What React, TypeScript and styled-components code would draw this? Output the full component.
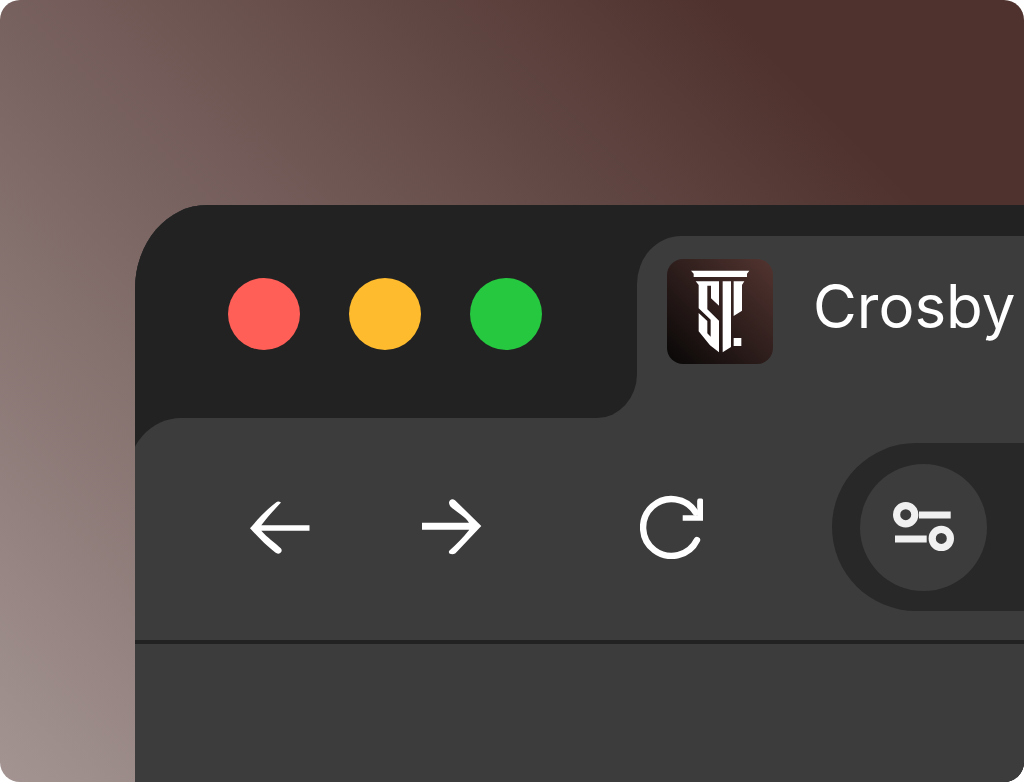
import React from "react";
import styled, { createGlobalStyle } from "styled-components";

const dark = "#222222";
const surface = "#3c3c3c";

const GlobalStyle = createGlobalStyle`
  * { box-sizing: border-box; }
  body { margin: 0; background: #ffffff; font-family: Inter, "Liberation Sans", sans-serif; }
  button { border: 0; padding: 0; background: none; color: inherit; font: inherit; cursor: pointer; }
  svg { display: block; }
`;

const Stage = styled.main`
  display: flex;
  min-height: 100vh;
  padding: 205px 0 0 135px;
  border-radius: 20px;
  overflow: hidden;
  background: linear-gradient(45deg, #a39492 0%, #4f322e 83%);
`;

const BrowserWindow = styled.section`
  flex: 1;
  min-width: 0;
  display: flex;
  flex-direction: column;
  overflow: hidden;
  border-top-left-radius: 72px 84px;
  background: ${dark};
`;

const TitleBar = styled.header`
  display: flex;
`;

const ControlsCell = styled.div`
  flex: none;
  background: ${surface};
`;

const Controls = styled.div`
  display: flex;
  gap: 49px;
  height: 213px;
  padding: 73px 95px 0 93px;
  border-bottom-right-radius: 40px 44px;
  background: ${dark};
`;

const Light = styled.button<{ $color: string }>`
  width: 72px;
  height: 72px;
  border-radius: 50%;
  background: ${(p) => p.$color};
`;

const Tab = styled.button`
  flex: 1;
  min-width: 0;
  display: flex;
  align-items: flex-start;
  gap: 40px;
  margin-top: 31px;
  padding: 23px 0 0 30px;
  overflow: hidden;
  border-top-left-radius: 44px 48px;
  background: ${surface};
  color: #ffffff;
`;

const Favicon = styled.span`
  flex: none;
  width: 106px;
  height: 105px;
  border-radius: 16px;
  overflow: hidden;
  background: linear-gradient(45deg, #0c0909 5%, #4f322e 95%);
`;

const TabTitle = styled.span`
  font-size: 60px;
  line-height: 94px;
  white-space: nowrap;
`;

const Toolbar = styled.nav`
  display: flex;
  align-items: center;
  margin-left: -8px;
  padding: 25px 0 29px 123px;
  border-top-left-radius: 54px 60px;
  border-bottom: 4px solid ${dark};
  background: ${surface};
  color: #ffffff;
`;

const ToolButton = styled.button<{ $after: number }>`
  flex: none;
  margin-right: ${(p) => p.$after}px;
`;

const AddressBar = styled.div`
  flex: 1;
  min-width: 0;
  display: flex;
  align-items: center;
  height: 168px;
  padding-left: 28px;
  border-radius: 84px 0 0 84px;
  background: #282828;
`;

const SiteSettings = styled.button`
  flex: none;
  display: grid;
  place-items: center;
  width: 127px;
  height: 127px;
  border-radius: 50%;
  background: ${surface};
  color: #f0f0f0;
`;

const AddressInput = styled.input`
  flex: 1;
  min-width: 0;
  width: 0;
  height: 96px;
  padding: 0;
  border: 0;
  outline: 0;
  background: transparent;
  color: #ffffff;
  font: inherit;
  font-size: 60px;
`;

const Content = styled.div`
  flex: 1;
  background: ${surface};
`;

const BackIcon = () => (
  <svg width="60" height="64" viewBox="0 0 60 64" fill="currentColor" aria-hidden="true">
    <path d="M0 33.3C8 24 17 14 26.3 7.2Q28.2 5.4 31 7.6C24 15 17 22.5 11.3 30.3H59.5V35.7H11.3C17.5 43 24.5 47 31 53.4Q32.6 56 30.5 57.8Q28 59.6 25.3 57.6C16 50.5 8 42 0 33.3Z" />
  </svg>
);

const ForwardIcon = () => (
  <svg width="60" height="64" viewBox="0 0 60 64" fill="currentColor" aria-hidden="true">
    <path d="M59.3 31L33 5.2Q30.3 3 27.8 5.4Q26 8 28.2 11.2C34 17 43 21 47 27.7H0V34.7H47.3C41 42.5 34.5 49 27.5 55.5Q26 57.4 27.8 58.8Q31 60 33.5 58.2Z" />
  </svg>
);

const ReloadIcon = () => (
  <svg width="64" height="64" viewBox="0 0 64 64" fill="none" stroke="currentColor" aria-hidden="true">
    <path d="M57 45A28.4 28.4 0 1 1 55.7 17.6" strokeWidth="6.4" strokeLinecap="round" />
    <path d="M42.7 23H60.2V5.4" strokeWidth="5.6" />
    <rect x="57.4" y="3.4" width="5.6" height="10" rx="1.5" fill="currentColor" stroke="none" />
  </svg>
);

const TuneIcon = () => (
  <svg width="64" height="56" viewBox="0.7 0.3 64 56" fill="none" stroke="currentColor" aria-hidden="true">
    <circle cx="14.4" cy="16" r="9.1" strokeWidth="7.2" />
    <path d="M27.7 16.2H59.4M3.7 40.2H35.4" strokeWidth="7" />
    <circle cx="50" cy="39.7" r="9.1" strokeWidth="7.2" />
  </svg>
);

const ColumnLogo = () => (
  <svg width="106" height="105" viewBox="36 25 318 315" fill="#ffffff" aria-hidden="true">
    <path d="M108 60H283L276 69V79H116V69Z" />
    <path d="M122 92H192V165L168 143V105H157V176L192 210V305L165 284L131 242V187L157 211V248L167 258V207L131 173V103Z" />
    <path d="M203 92H228V289L203 305Z" />
    <path d="M236 92H268L261 103V180L236 196Z" />
    <path d="M236 262H259V286H236Z" />
  </svg>
);

export default function App() {
  return (
    <>
      <GlobalStyle />
      <Stage>
        <BrowserWindow aria-label="Browser window">
          <TitleBar>
            <ControlsCell>
              <Controls>
                <Light $color="#ff5f57" aria-label="Close" />
                <Light $color="#febb2e" aria-label="Minimize" />
                <Light $color="#26c840" aria-label="Maximize" />
              </Controls>
            </ControlsCell>
            <Tab>
              <Favicon>
                <ColumnLogo />
              </Favicon>
              <TabTitle>Crosby</TabTitle>
            </Tab>
          </TitleBar>
          <Toolbar aria-label="Navigation">
            <ToolButton $after={112} aria-label="Back">
              <BackIcon />
            </ToolButton>
            <ToolButton $after={158} aria-label="Forward">
              <ForwardIcon />
            </ToolButton>
            <ToolButton $after={128} aria-label="Reload">
              <ReloadIcon />
            </ToolButton>
            <AddressBar>
              <SiteSettings aria-label="Site settings">
                <TuneIcon />
              </SiteSettings>
              <AddressInput type="text" aria-label="Address" />
            </AddressBar>
          </Toolbar>
          <Content />
        </BrowserWindow>
      </Stage>
    </>
  );
}
